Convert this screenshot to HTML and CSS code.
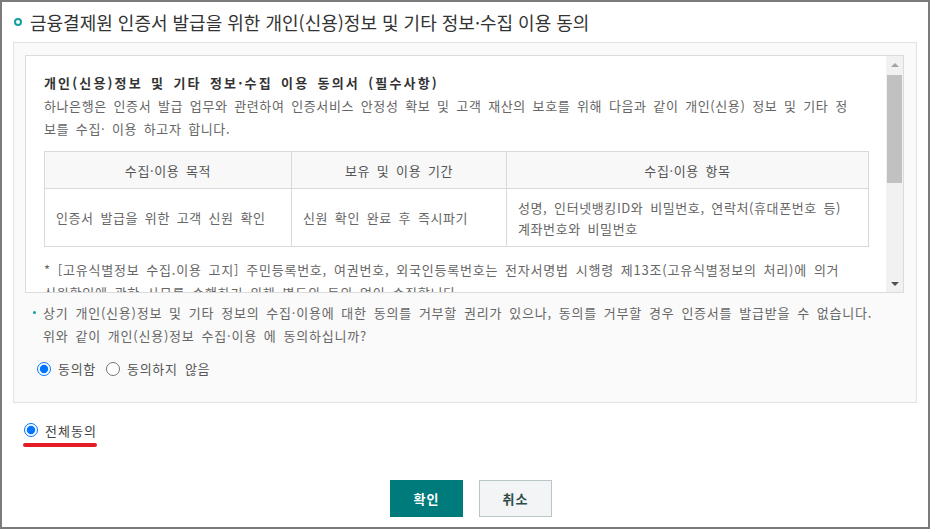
FILE: index.html
```html
<!DOCTYPE html>
<html lang="ko">
<head>
<meta charset="utf-8">
<title>동의</title>
<link rel="stylesheet" href="styles.css">
</head>
<body>
<div class="window">
  <h1 class="title"><span class="title-dot"></span>금융결제원 인증서 발급을 위한 개인(신용)정보 및 기타 정보·수집 이용 동의</h1>
  <div class="panel">
    <div class="scrollbox">
      <div class="scroll-content">
        <p class="doc-heading">개인(신용)정보 및 기타 정보·수집 이용 동의서 (필수사항)</p>
        <p class="doc-text">하나은행은 인증서 발급 업무와 관련하여 인증서비스 안정성 확보 및 고객 재산의 보호를 위해 다음과 같이 개인(신용) 정보 및 기타 정<br>보를 수집· 이용 하고자 합니다.</p>
        <table class="info-table">
          <colgroup><col class="c1"><col class="c2"><col class="c3"></colgroup>
          <thead>
            <tr><th>수집·이용 목적</th><th>보유 및 이용 기간</th><th>수집·이용 항목</th></tr>
          </thead>
          <tbody>
            <tr><td>인증서 발급을 위한 고객 신원 확인</td><td>신원 확인 완료 후 즉시파기</td><td>성명, 인터넷뱅킹ID와 비밀번호, 연락처(휴대폰번호 등)<br>계좌번호와 비밀번호</td></tr>
          </tbody>
        </table>
        <p class="doc-text note">* [고유식별정보 수집.이용 고지] 주민등록번호, 여권번호, 외국인등록번호는 전자서명법 시행령 제13조(고유식별정보의 처리)에 의거<br>신원확인에 관한 사무를 수행하기 위해 별도의 동의 없이 수집합니다.</p>
      </div>
      <div class="scrollbar">
        <div class="sb-btn"><span class="arrow-up"></span></div>
        <div class="sb-track"><div class="sb-thumb"></div></div>
        <div class="sb-btn"><span class="arrow-down"></span></div>
      </div>
    </div>
    <p class="bullet-text"><span class="bullet"></span>상기 개인(신용)정보 및 기타 정보의 수집·이용에 대한 동의를 거부할 권리가 있으나, 동의를 거부할 경우 인증서를 발급받을 수 없습니다.<br>위와 같이 개인(신용)정보 수집·이용 에 동의하십니까?</p>
    <div class="radios">
      <label class="radio"><input type="radio" name="agree1" checked><span>동의함</span></label>
      <label class="radio"><input type="radio" name="agree1"><span>동의하지 않음</span></label>
    </div>
  </div>
  <div class="all-agree">
    <label class="radio all"><input type="radio" name="all" checked><span>전체동의</span></label>
    <div class="highlight"></div>
  </div>
  <div class="buttons">
    <button class="btn btn-ok" type="button">확인</button>
    <button class="btn btn-cancel" type="button">취소</button>
  </div>
</div>
</body>
</html>
```

FILE: styles.css
```css
html, body {
  margin: 0;
  padding: 0;
  background: #ffffff;
}

.window {
  width: 930px;
  height: 529px;
  box-sizing: border-box;
  border: 2px solid #7b7b7b;
  background: #ffffff;
  padding: 0 11px;
  font-family: "Noto Sans CJK KR", "Noto Sans", sans-serif;
  color: #666666;
  overflow: hidden;
}

.title {
  margin: 8px 0 0 0;
  height: 24px;
  line-height: 24px;
  font-size: 18px;
  font-weight: normal;
  color: #333333;
  display: flex;
  align-items: center;
}

.title-dot {
  width: 4px;
  height: 4px;
  border: 2.5px solid #12a0a0;
  border-radius: 50%;
  margin: 0 8px 0 1px;
  flex: none;
}

.panel {
  margin-top: 8px;
  border: 1px solid #e2e2e2;
  background: #fafafa;
  padding: 12px 12px 0 11px;
  height: 361px;
  box-sizing: border-box;
}

.scrollbox {
  height: 238px;
  box-sizing: border-box;
  border: 1px solid #dcdcdc;
  background: #ffffff;
  display: flex;
}

.scroll-content {
  flex: 1;
  overflow: hidden;
  padding: 15px 17px 0 18px;
  font-size: 13px;
  line-height: 23px;
  letter-spacing: 0.6px;
  word-spacing: 2.5px;
}

.scroll-content p {
  margin: 0;
  white-space: nowrap;
}

.doc-heading {
  font-weight: bold;
  color: #333333;
  letter-spacing: 2.15px;
}

.scroll-content .note {
  letter-spacing: 0.78px;
}

.info-table {
  width: 100%;
  border-collapse: collapse;
  margin: 11px 0;
  border: 1px solid #d9d9d9;
  font-size: 13px;
}

.info-table .c1 { width: 247px; }
.info-table .c2 { width: 215px; }

.info-table th {
  height: 36px;
  background: #f8f8f8;
  font-weight: normal;
  color: #555555;
  border: 1px solid #d9d9d9;
  text-align: center;
  padding: 0;
}

.info-table td {
  height: 57px;
  border: 1px solid #d9d9d9;
  padding: 0 11px;
  line-height: 21px;
  color: #666666;
  text-align: left;
  white-space: nowrap;
}

.scrollbar {
  width: 17px;
  flex: none;
  background: #f1f1f1;
  display: flex;
  flex-direction: column;
}

.sb-btn {
  height: 17px;
  display: flex;
  align-items: center;
  justify-content: center;
  flex: none;
}

.arrow-up {
  width: 0;
  height: 0;
  border-left: 4px solid transparent;
  border-right: 4px solid transparent;
  border-bottom: 4px solid #a3a3a3;
}

.arrow-down {
  width: 0;
  height: 0;
  border-left: 4px solid transparent;
  border-right: 4px solid transparent;
  border-top: 4px solid #505050;
}

.sb-track {
  flex: 1;
  padding: 2px 1px 0 1px;
}

.sb-thumb {
  height: 108px;
  background: #c1c1c1;
}

.bullet-text {
  margin: 8px 0 0 0;
  padding-left: 18px;
  position: relative;
  font-size: 13px;
  line-height: 23px;
  letter-spacing: 0.78px;
  word-spacing: 2.5px;
  white-space: nowrap;
  color: #666666;
}

.bullet {
  position: absolute;
  left: 8px;
  top: 10px;
  width: 3px;
  height: 3px;
  border-radius: 50%;
  background: #12a0a0;
}

.radios {
  margin-top: 10px;
  padding-left: 12px;
  height: 23px;
  display: flex;
  align-items: center;
  gap: 10px;
}

.radio {
  display: inline-flex;
  align-items: center;
  font-size: 13px;
  color: #555555;
  letter-spacing: 0.7px;
  word-spacing: 3px;
}

.radio input {
  width: 14px;
  height: 14px;
  margin: 0 7px 0 0;
}

.all-agree {
  margin-top: 17px;
  padding-left: 10px;
  display: inline-flex;
  flex-direction: column;
}

.radio.all {
  height: 20px;
  padding-left: 1px;
  color: #444444;
  letter-spacing: 1px;
}

.radio.all input {
  margin-right: 7px;
}

.highlight {
  margin-top: 3px;
  width: 74px;
  height: 4px;
  border-radius: 2px;
  background: #e31c25;
}

.buttons {
  margin-top: 33px;
  padding-left: 12px;
  display: flex;
  justify-content: center;
  gap: 16px;
}

.btn {
  width: 73px;
  height: 37px;
  box-sizing: border-box;
  font-family: "Noto Sans CJK KR", "Noto Sans", sans-serif;
  font-size: 13px;
  font-weight: bold;
  letter-spacing: 1px;
  cursor: pointer;
  padding: 0;
}

.btn-ok {
  background: #007b7b;
  color: #ffffff;
  border: 1px solid #007b7b;
}

.btn-cancel {
  background: #f2f4f6;
  color: #2e4a4a;
  border: 1px solid #b7c7c7;
}
```
